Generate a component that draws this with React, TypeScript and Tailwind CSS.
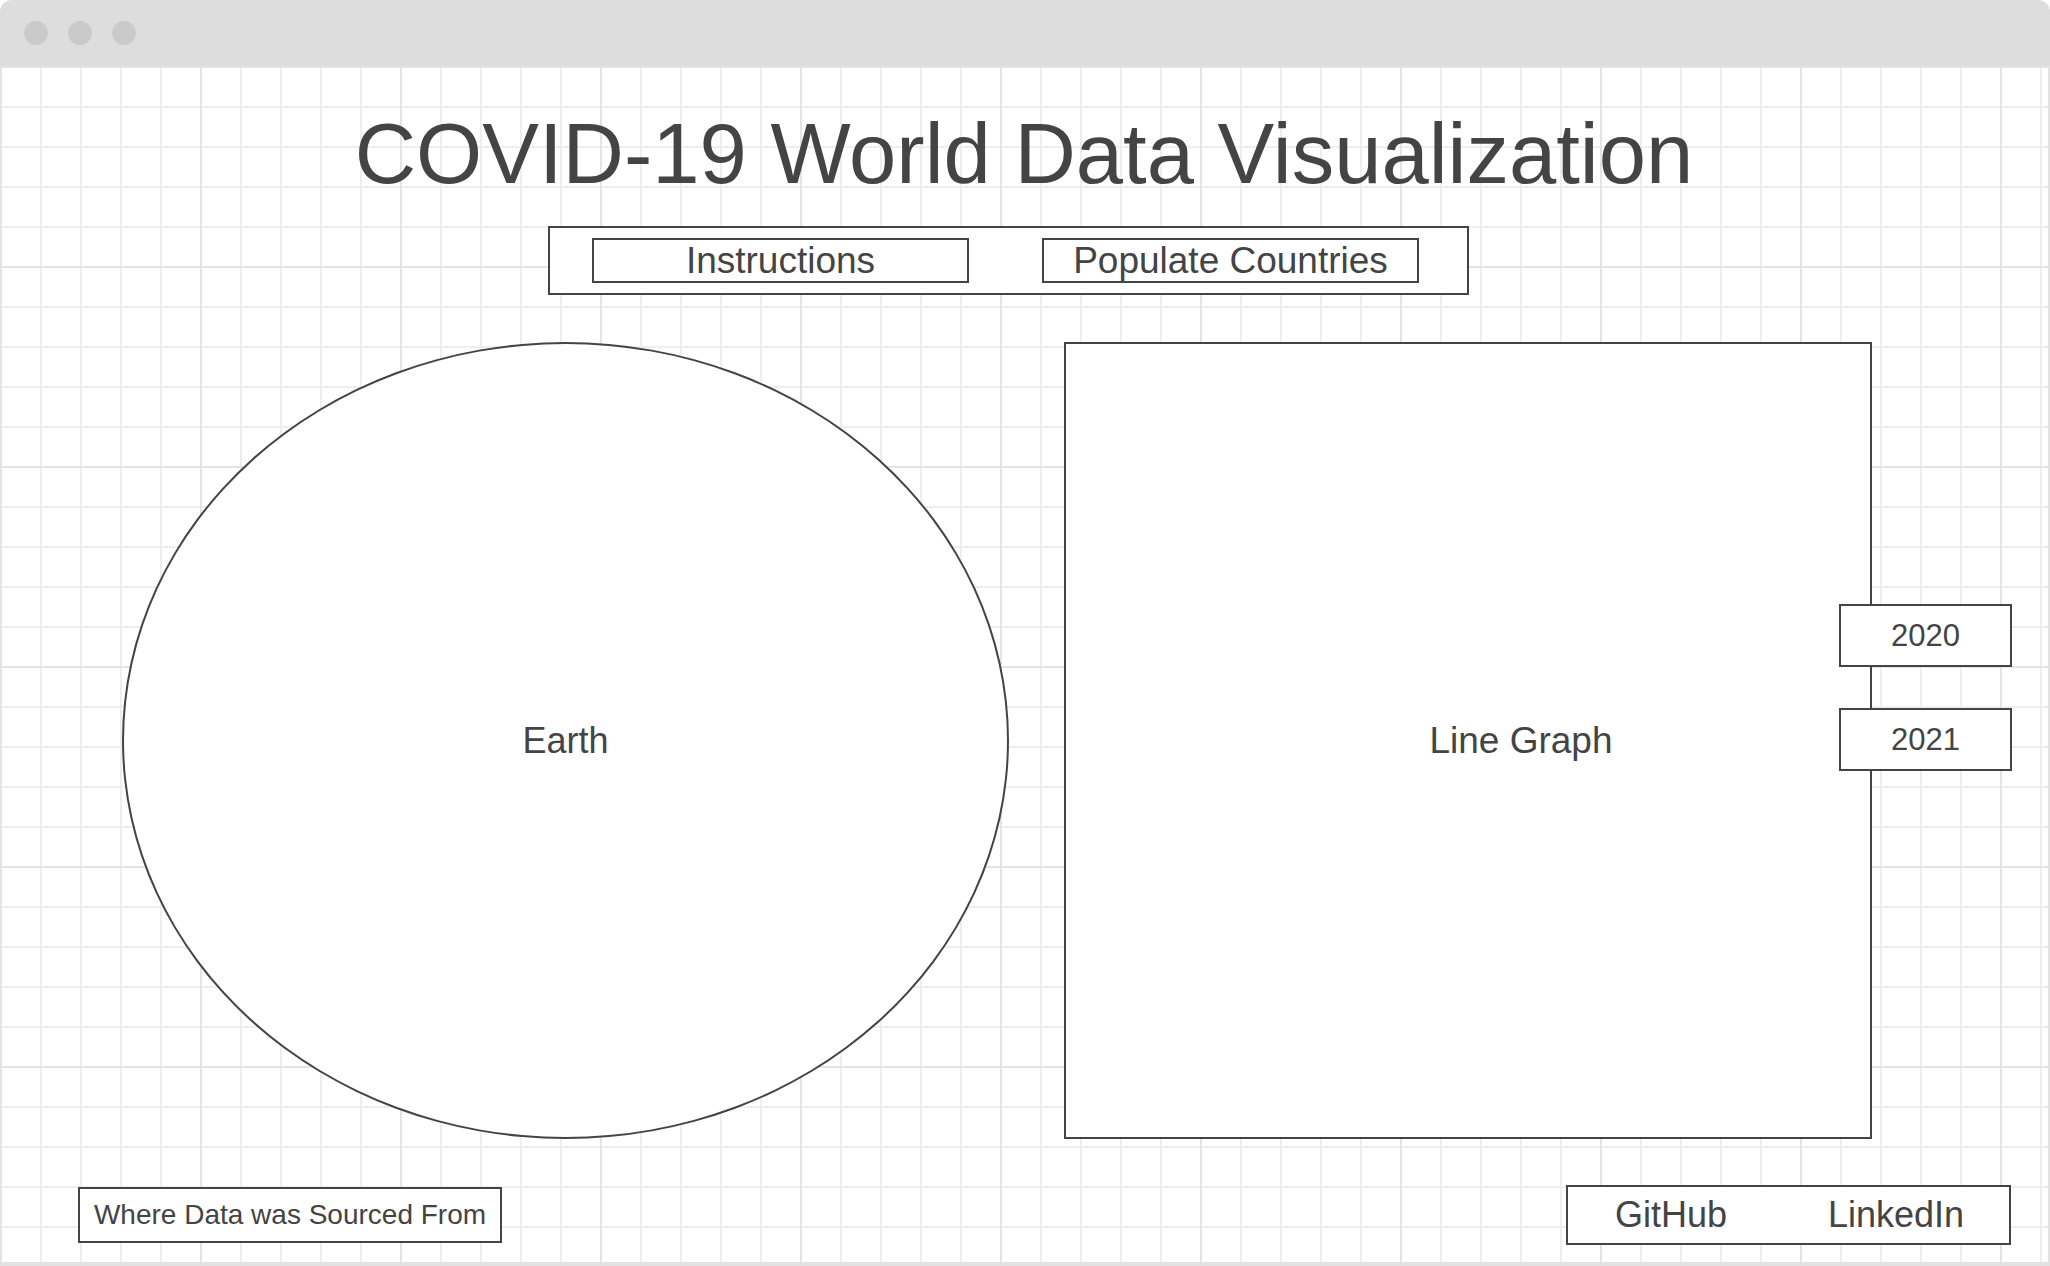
const boxText = "text-[#444] font-['Liberation_Sans',Arial,sans-serif] leading-none"

function WindowBar() {
  return (
    <div className="h-[66px] shrink-0 bg-[#dddddd] rounded-t-[12px] flex items-center gap-[20px] pl-[24px]">
      <span className="w-[24px] h-[24px] rounded-full bg-[#cacaca]" />
      <span className="w-[24px] h-[24px] rounded-full bg-[#cacaca]" />
      <span className="w-[24px] h-[24px] rounded-full bg-[#cacaca]" />
    </div>
  )
}

function YearTab({ year, top }: { year: string; top: string }) {
  return (
    <div
      className={`absolute left-[773px] ${top} w-[173px] h-[63px] bg-white border-2 border-[#444] flex items-center justify-center text-[31px] ${boxText}`}
    >
      {year}
    </div>
  )
}

export default function App() {
  return (
    <div className={`w-[2050px] h-[1266px] flex flex-col bg-white ${boxText}`}>
      <WindowBar />

      <main className="flex-1 flex flex-col border-r-2 border-b-4 border-[#e2e2e2] bg-white bg-[linear-gradient(to_right,#e4e4e4_2px,transparent_2px),linear-gradient(to_bottom,#e4e4e4_2px,transparent_2px),linear-gradient(to_right,#eeeeee_2px,transparent_2px),linear-gradient(to_bottom,#eeeeee_2px,transparent_2px)] bg-[size:200px_200px,200px_200px,40px_40px,40px_40px]">
        {/* Title */}
        <h1 className="mt-[45px] text-center text-[85px] leading-none font-normal">
          COVID-19 World Data Visualization
        </h1>

        {/* Top buttons */}
        <div className="mt-[30px] ml-[548px] w-[921px] h-[69px] bg-white border-2 border-[#444] flex items-start gap-[73px] pl-[42px] pt-[10px]">
          <div className="w-[377px] h-[45px] border-2 border-[#444] flex items-center justify-center text-[37px]">
            Instructions
          </div>
          <div className="w-[377px] h-[45px] border-2 border-[#444] flex items-center justify-center text-[37px]">
            Populate Countries
          </div>
        </div>

        {/* Globe + graph */}
        <div className="mt-[47px] flex items-start">
          <div className="ml-[122px] w-[887px] h-[797px] rounded-[50%] border-2 border-[#444] bg-white flex items-center justify-center text-[36px]">
            Earth
          </div>
          <div className="relative ml-[55px] w-[808px] h-[797px] border-2 border-[#444] bg-white flex items-center justify-center pl-[106px] text-[37px]">
            Line Graph
            <YearTab year="2020" top="top-[260px]" />
            <YearTab year="2021" top="top-[364px]" />
          </div>
        </div>

        {/* Footer */}
        <div className="mt-[46px] flex items-center justify-between mr-[37px]">
          <div className="ml-[78px] w-[424px] h-[56px] bg-white border-2 border-[#444] flex items-center justify-center text-[28px]">
            Where Data was Sourced From
          </div>
          <div className="w-[445px] h-[60px] bg-white border-2 border-[#444] flex items-center justify-between pl-[47px] pr-[45px] text-[36px]">
            <span>GitHub</span>
            <span>LinkedIn</span>
          </div>
        </div>
      </main>
    </div>
  )
}
